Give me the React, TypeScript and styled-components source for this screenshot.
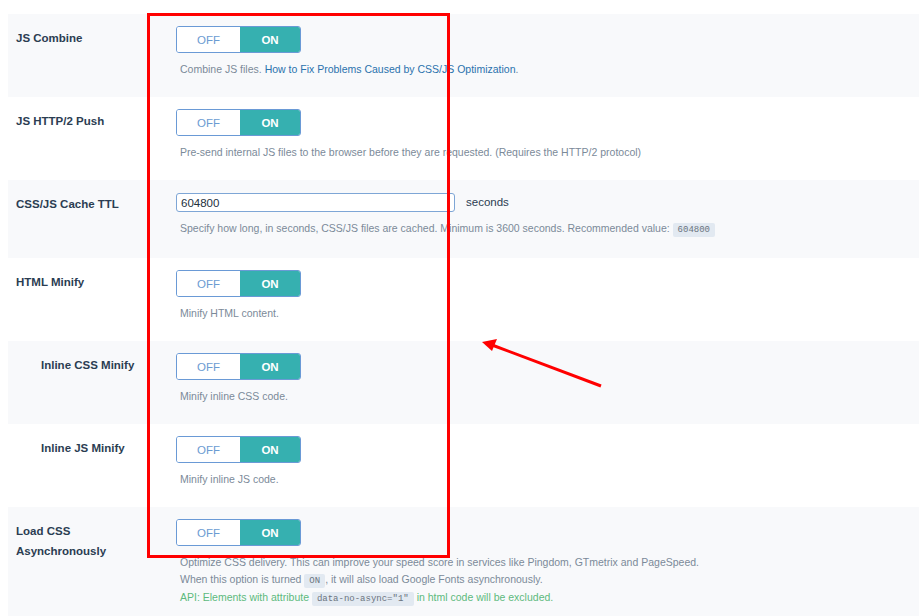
import React from "react";
import styled, { createGlobalStyle } from "styled-components";

const GlobalStyle = createGlobalStyle`
  body {
    margin: 0;
    background: #ffffff;
    font-family: "Liberation Sans", Arial, sans-serif;
  }
`;

const Page = styled.div`
  position: relative;
  padding: 14px 0 0 8px;
  height: 616px;
  overflow: hidden;
  box-sizing: border-box;
`;

const Row = styled.div<{ $shade: boolean }>`
  display: grid;
  grid-template-columns: 160px 1fr;
  background: ${(p) => (p.$shade ? "#f8f9fb" : "#ffffff")};
`;

const Label = styled.div<{ $indent?: boolean }>`
  padding: 14px 8px 0 ${(p) => (p.$indent ? "33px" : "8px")};
  font-size: 11.5px;
  line-height: 20px;
  font-weight: bold;
  color: #2b3d52;
`;

const Field = styled.div`
  padding: 12px 0 19.5px 8px;
`;

const Toggle = styled.div`
  display: inline-flex;
  width: 125px;
  height: 27px;
  border: 1px solid #6a9ad6;
  border-radius: 3px;
  box-sizing: border-box;
  overflow: hidden;
  font-size: 11.5px;
`;

const Side = styled.div<{ $on?: boolean }>`
  display: flex;
  align-items: center;
  justify-content: center;
  width: ${(p) => (p.$on ? "60px" : "63px")};
  background: ${(p) => (p.$on ? "#36b0b0" : "#ffffff")};
  color: ${(p) => (p.$on ? "#ffffff" : "#6b9bd2")};
  font-weight: ${(p) => (p.$on ? "bold" : "normal")};
`;

const Desc = styled.div<{ $green?: boolean }>`
  margin-top: 8px;
  padding-left: 4px;
  font-size: 10.5px;
  line-height: 16.5px;
  color: ${(p) => (p.$green ? "#5dba7d" : "#7b8a99")};
  & + & {
    margin-top: 0;
  }
`;

const Link = styled.a`
  color: #2a72ad;
  text-decoration: none;
`;

const Code = styled.code`
  font-family: "Liberation Mono", "DejaVu Sans Mono", monospace;
  font-size: 9px;
  color: #6b7480;
  background: #e2e9f1;
  border-radius: 2px;
  padding: 2px 5px;
`;

const InputLine = styled.div`
  display: flex;
  align-items: center;
  gap: 11px;
  padding-top: 1px;
`;

const TextInput = styled.input`
  width: 279px;
  height: 19px;
  box-sizing: border-box;
  border: 1px solid #7ea6d6;
  border-radius: 3px;
  padding: 0 4px;
  font-family: "Liberation Sans", Arial, sans-serif;
  font-size: 11.5px;
  color: #23303d;
  background: #fff;
`;

const Unit = styled.span`
  font-size: 11.5px;
  line-height: 19px;
  color: #2b3d52;
`;

const Annotation = styled.div`
  position: absolute;
  left: 147px;
  top: 13px;
  width: 303px;
  height: 545px;
  border: 3px solid #f00;
  box-sizing: border-box;
  pointer-events: none;
`;

const Arrow = styled.svg`
  position: absolute;
  left: 470px;
  top: 330px;
  pointer-events: none;
`;

const OnOff = () => (
  <Toggle>
    <Side>OFF</Side>
    <Side $on>ON</Side>
  </Toggle>
);

export default function App() {
  return (
    <>
      <GlobalStyle />
      <Page>
        <Row $shade>
          <Label>JS Combine</Label>
          <Field>
            <OnOff />
            <Desc>
              Combine JS files.{" "}
              <Link href="#">How to Fix Problems Caused by CSS/JS Optimization</Link>.
            </Desc>
          </Field>
        </Row>
        <Row $shade={false}>
          <Label>JS HTTP/2 Push</Label>
          <Field>
            <OnOff />
            <Desc>
              Pre-send internal JS files to the browser before they are requested. (Requires the
              HTTP/2 protocol)
            </Desc>
          </Field>
        </Row>
        <Row $shade>
          <Label>CSS/JS Cache TTL</Label>
          <Field>
            <InputLine>
              <TextInput defaultValue="604800" />
              <Unit>seconds</Unit>
            </InputLine>
            <Desc>
              Specify how long, in seconds, CSS/JS files are cached. Minimum is 3600 seconds.
              Recommended value: <Code>604800</Code>
            </Desc>
          </Field>
        </Row>
        <Row $shade={false}>
          <Label>HTML Minify</Label>
          <Field>
            <OnOff />
            <Desc>Minify HTML content.</Desc>
          </Field>
        </Row>
        <Row $shade>
          <Label $indent>Inline CSS Minify</Label>
          <Field>
            <OnOff />
            <Desc>Minify inline CSS code.</Desc>
          </Field>
        </Row>
        <Row $shade={false}>
          <Label $indent>Inline JS Minify</Label>
          <Field>
            <OnOff />
            <Desc>Minify inline JS code.</Desc>
          </Field>
        </Row>
        <Row $shade>
          <Label>
            Load CSS
            <br />
            Asynchronously
          </Label>
          <Field>
            <OnOff />
            <Desc>
              Optimize CSS delivery. This can improve your speed score in services like Pingdom,
              GTmetrix and PageSpeed.
            </Desc>
            <Desc>
              When this option is turned <Code>ON</Code>, it will also load Google Fonts
              asynchronously.
            </Desc>
            <Desc $green>
              API: Elements with attribute <Code>data-no-async="1"</Code> in html code will be
              excluded.
            </Desc>
          </Field>
        </Row>
        <Annotation />
        <Arrow width="140" height="64" viewBox="0 0 140 64">
          <line x1="131" y1="56" x2="22" y2="15" stroke="#f00" strokeWidth="3" />
          <polygon points="12,12 27,9 22,21" fill="#f00" />
        </Arrow>
      </Page>
    </>
  );
}
